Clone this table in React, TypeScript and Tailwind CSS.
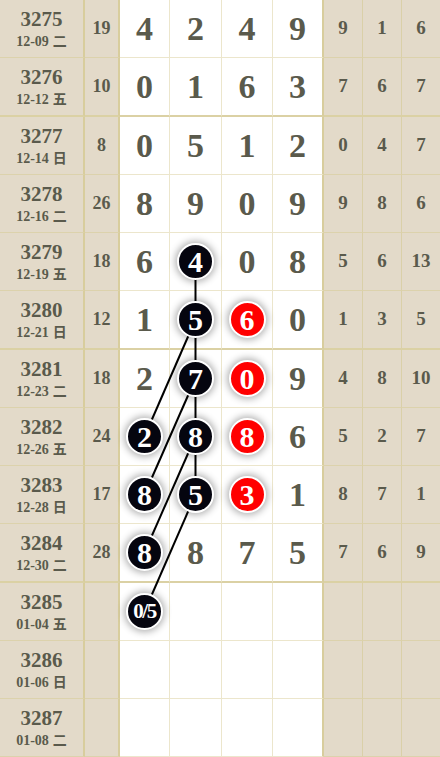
import React from "react";

type Ball = { v: string; red?: boolean };
type Cell = string | Ball | null;

type Row = {
  no: string;
  date: string;
  day: string;
  sum: string;
  mid: Cell[];
  right: string[];
};

const rows: Row[] = [
  { no: "3275", date: "12-09", day: "二", sum: "19", mid: ["4", "2", "4", "9"], right: ["9", "1", "6"] },
  { no: "3276", date: "12-12", day: "五", sum: "10", mid: ["0", "1", "6", "3"], right: ["7", "6", "7"] },
  { no: "3277", date: "12-14", day: "日", sum: "8", mid: ["0", "5", "1", "2"], right: ["0", "4", "7"] },
  { no: "3278", date: "12-16", day: "二", sum: "26", mid: ["8", "9", "0", "9"], right: ["9", "8", "6"] },
  { no: "3279", date: "12-19", day: "五", sum: "18", mid: ["6", { v: "4" }, "0", "8"], right: ["5", "6", "13"] },
  { no: "3280", date: "12-21", day: "日", sum: "12", mid: ["1", { v: "5" }, { v: "6", red: true }, "0"], right: ["1", "3", "5"] },
  { no: "3281", date: "12-23", day: "二", sum: "18", mid: ["2", { v: "7" }, { v: "0", red: true }, "9"], right: ["4", "8", "10"] },
  { no: "3282", date: "12-26", day: "五", sum: "24", mid: [{ v: "2" }, { v: "8" }, { v: "8", red: true }, "6"], right: ["5", "2", "7"] },
  { no: "3283", date: "12-28", day: "日", sum: "17", mid: [{ v: "8" }, { v: "5" }, { v: "3", red: true }, "1"], right: ["8", "7", "1"] },
  { no: "3284", date: "12-30", day: "二", sum: "28", mid: [{ v: "8" }, "8", "7", "5"], right: ["7", "6", "9"] },
  { no: "3285", date: "01-04", day: "五", sum: "", mid: [{ v: "0/5" }, null, null, null], right: ["", "", ""] },
  { no: "3286", date: "01-06", day: "日", sum: "", mid: [null, null, null, null], right: ["", "", ""] },
  { no: "3287", date: "01-08", day: "二", sum: "", mid: [null, null, null, null], right: ["", "", ""] },
];

// rows that close a group of four get the heavy rule
const groupEnd = [1, 5, 9];

const midX = [144.5, 195.5, 247, 297.5];
const rowTops: number[] = [];
{
  let y = 0;
  rows.forEach((_, i) => {
    rowTops.push(y);
    y += groupEnd.includes(i) ? 59 : 58;
  });
}
const cy = (i: number) => rowTops[i] + 28.5;

const links: [number, number, number, number][] = [
  [1, 4, 1, 8],
  [1, 5, 0, 7],
  [1, 6, 0, 8],
  [1, 7, 0, 9],
  [1, 8, 0, 10],
];

const serif = "font-['Liberation_Serif','Noto_Sans_CJK_SC',serif]";
const midW = ["w-[50px]", "w-[52px]", "w-[51px]", "w-[51px]"];
const rightW = ["w-[39px]", "w-[39px]", "w-[38px]"];

function BallView({ b }: { b: Ball }) {
  return (
    <div
      className={`relative z-[2] flex h-[37px] w-[37px] items-center justify-center rounded-full border-2 border-white shadow-[0_0_7px_2px_rgba(0,0,0,0.3)] ${
        b.red ? "bg-[#ff0000]" : "bg-[#05050f]"
      }`}
    >
      <span
        className={`font-bold leading-none text-white ${
          b.v.length > 1 ? "text-[21px] tracking-[-1.5px]" : "text-[30px]"
        }`}
      >
        {b.v}
      </span>
    </div>
  );
}

export default function App() {
  return (
    <div className={`relative w-[440px] overflow-hidden bg-white text-[#5a5a4c] ${serif}`}>
      <svg
        className="pointer-events-none absolute left-0 top-0 z-[1]"
        width={440}
        height={757}
      >
        {links.map(([c1, r1, c2, r2], k) => (
          <line
            key={k}
            x1={midX[c1]}
            y1={cy(r1)}
            x2={midX[c2]}
            y2={cy(r2)}
            stroke="#000"
            strokeWidth={2}
          />
        ))}
      </svg>

      {rows.map((r, i) => {
        const thick = groupEnd.includes(i);
        const hb = thick ? "h-[59px] border-b-2 border-b-[#dbd1a4]" : "h-[58px] border-b";
        return (
          <div key={r.no} className="flex">
            <div
              className={`flex w-[85px] flex-col items-center justify-center border-r-2 border-r-[#d8cd9d] bg-[#e3dac9] font-bold ${hb} ${
                thick ? "" : "border-b-[#dcd2ac]"
              }`}
            >
              <div className="text-[21px] leading-[24px]">{r.no}</div>
              <div className="mt-[3px] flex items-center gap-[4px] text-[14px] leading-[16px]">
                <span>{r.date}</span>
                <span className="text-[14px]">{r.day}</span>
              </div>
            </div>
            <div
              className={`flex w-[35px] items-center justify-center border-r-2 border-r-[#d8cd9d] bg-[#e3dac9] text-[18px] font-bold ${hb} ${
                thick ? "" : "border-b-[#dcd2ac]"
              }`}
            >
              {r.sum}
            </div>
            {r.mid.map((c, j) => (
              <div
                key={j}
                className={`flex items-center justify-center bg-white ${midW[j]} ${hb} ${
                  thick ? "" : "border-b-[#ece6cc]"
                } ${j === 3 ? "border-r-2 border-r-[#d8cd9d]" : "border-r border-r-[#ece6cc]"}`}
              >
                {c === null ? null : typeof c === "string" ? (
                  <span className="text-[34px] font-bold leading-none">{c}</span>
                ) : (
                  <BallView b={c} />
                )}
              </div>
            ))}
            {r.right.map((v, j) => (
              <div
                key={j}
                className={`flex items-center justify-center bg-[#e3dac9] text-[19px] font-bold ${rightW[j]} ${hb} ${
                  thick ? "" : "border-b-[#dcd2ac]"
                } ${j < 2 ? "border-r border-r-[#dad0a8]" : ""}`}
              >
                {v}
              </div>
            ))}
          </div>
        );
      })}
    </div>
  );
}
